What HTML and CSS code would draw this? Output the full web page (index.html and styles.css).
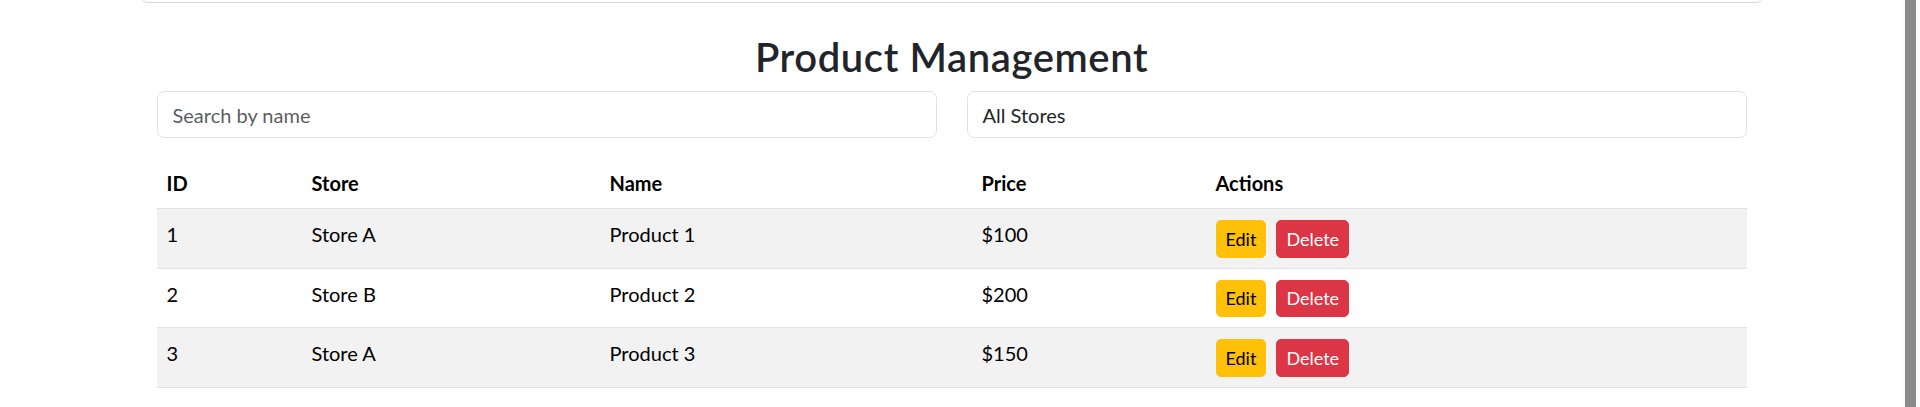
FILE: index.html
```html
<!DOCTYPE html>
<html lang="en">
<head>
<meta charset="utf-8">
<title>Product Management</title>
<link rel="stylesheet" href="styles.css">
</head>
<body>
<div class="page">
  <div class="container">
    <div class="top-card"></div>
    <section class="section">
      <h2 class="title">Product Management</h2>
      <div class="filters">
        <input class="field" type="text" placeholder="Search by name">
        <div class="field select">All Stores</div>
      </div>
      <table class="products">
        <colgroup>
          <col class="c-id"><col class="c-store"><col class="c-name"><col class="c-price"><col class="c-actions">
        </colgroup>
        <thead>
          <tr><th>ID</th><th>Store</th><th>Name</th><th>Price</th><th>Actions</th></tr>
        </thead>
        <tbody>
          <tr class="odd"><td>1</td><td>Store A</td><td>Product 1</td><td>$100</td><td><div class="actions"><button class="btn btn-edit">Edit</button><button class="btn btn-delete">Delete</button></div></td></tr>
          <tr><td>2</td><td>Store B</td><td>Product 2</td><td>$200</td><td><div class="actions"><button class="btn btn-edit">Edit</button><button class="btn btn-delete">Delete</button></div></td></tr>
          <tr class="odd"><td>3</td><td>Store A</td><td>Product 3</td><td>$150</td><td><div class="actions"><button class="btn btn-edit">Edit</button><button class="btn btn-delete">Delete</button></div></td></tr>
        </tbody>
      </table>
    </section>
  </div>
</div>
<div class="scrollbar"><div class="thumb"></div></div>
</body>
</html>
```

FILE: styles.css
```css
* { box-sizing: border-box; }
html, body { margin: 0; padding: 0; height: 407px; overflow: hidden; }
body {
  display: flex;
  background: #fff;
  font-family: Lato, "Noto Sans", sans-serif;
  font-size: 20px;
  color: #212529;
}
.page { flex: 1; min-width: 0; }
.container {
  width: 1652px;
  margin: 0 auto;
  padding: 0 15px;
}
.top-card {
  height: 23px;
  margin-top: -20px;
  border: 1px solid #d6d6d6;
  border-radius: 7px;
}
.section { padding: 0 16px; }
.title {
  margin: 30px 0 10px;
  text-align: center;
  font-size: 40px;
  font-weight: 600;
  line-height: 48px;
  letter-spacing: 0.6px;
  color: #212529;
}
.filters {
  display: flex;
  gap: 30px;
  margin-bottom: 20px;
}
.field {
  flex: 1;
  height: 47px;
  padding: 0 15px;
  border: 1px solid #dee2e6;
  border-radius: 7.5px;
  font-family: inherit;
  font-size: 20px;
  color: #212529;
  background: #fff;
  outline: none;
}
.field::placeholder { color: rgba(33, 37, 41, 0.75); }
.select { display: flex; align-items: center; }
.products {
  width: 100%;
  border-collapse: collapse;
  table-layout: fixed;
  color: #000;
}
.c-id { width: 145px; }
.c-store { width: 298px; }
.c-name { width: 372px; }
.c-price { width: 234px; }
.products th, .products td {
  text-align: left;
  vertical-align: top;
  padding: 10px 10px;
  line-height: 30px;
  border-bottom: 1px solid #dee2e6;
}
.products th { font-weight: 700; }
.products tr.odd td { background: #f2f2f2; }
.actions { display: flex; gap: 10px; padding-top: 1px; }
.btn {
  height: 37.5px;
  padding: 0 9px;
  border: 1px solid transparent;
  border-radius: 5px;
  font-family: inherit;
  font-size: 18px;
  line-height: 1;
}
.btn-edit { background: #ffc107; border-color: #ffc107; color: #000; }
.btn-delete { background: #dc3545; border-color: #dc3545; color: #fff; }
.scrollbar {
  width: 17px;
  flex: none;
  height: 407px;
  background: #fbfbfb;
  padding: 0 4px 0 2px;
}
.thumb { height: 100%; background: #8a8a8a; }
```
